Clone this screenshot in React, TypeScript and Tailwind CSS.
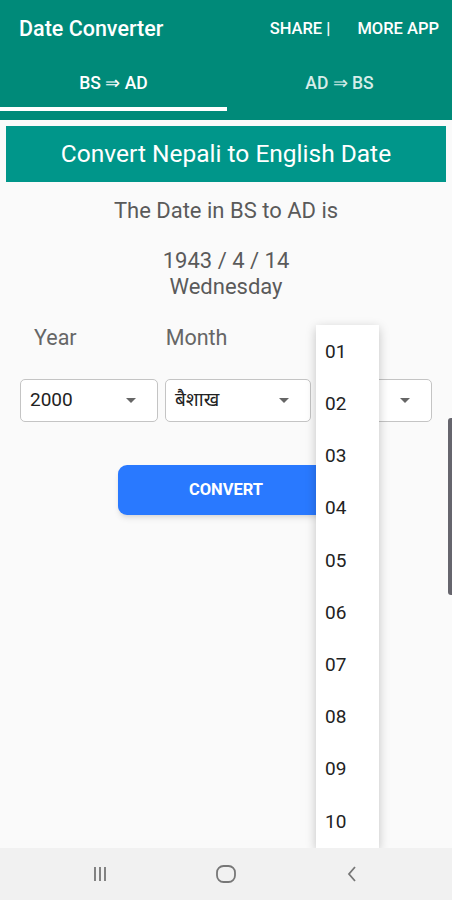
import React from "react";

const font = { fontFamily: "Roboto, 'Noto Sans', 'Noto Sans Devanagari', sans-serif" };

function Caret() {
  return (
    <svg width="10" height="6" viewBox="0 0 10 6" className="shrink-0">
      <path d="M0 0 L10 0 L5 5 Z" fill="#666" />
    </svg>
  );
}

function Select({ value, className }: { value: string; className: string }) {
  return (
    <div
      className={`h-[43px] border border-[#c4c4c4] rounded-[5px] bg-white flex items-center justify-between pl-[9px] pr-[21px] ${className}`}
    >
      <span className="text-[19px] text-[#222]">{value}</span>
      <Caret />
    </div>
  );
}

export default function App() {
  const days = ["01", "02", "03", "04", "05", "06", "07", "08", "09", "10"];
  return (
    <div className="w-[452px] h-[900px] bg-[#fafafa] relative overflow-hidden flex flex-col" style={font}>
      {/* App bar */}
      <div className="bg-[#008a79] h-[120px] flex flex-col shrink-0">
        <div className="h-[58px] flex items-center justify-between pl-[19px] pr-[13px]">
          <span className="text-white text-[21.5px] font-medium">Date Converter</span>
          <div className="flex items-center gap-[27px] text-white text-[16.5px] font-medium">
            <span>SHARE |</span>
            <span>MORE APP</span>
          </div>
        </div>
        <div className="flex h-[53px]">
          <div className="w-[227px] flex flex-col">
            <div className="flex-1 flex items-center justify-center text-white text-[17.5px] font-medium pt-[2px]">BS ⇒ AD</div>
            <div className="h-[4px] bg-white" />
          </div>
          <div className="flex-1 flex items-center justify-center text-[#d6ede9] text-[17.5px] font-medium pb-[2px]">AD ⇒ BS</div>
        </div>
      </div>

      {/* Content */}
      <div className="px-[6px] pt-[6px]">
        <div className="bg-[#00968a] h-[56px] flex items-center justify-center text-white text-[24.5px]">
          Convert Nepali to English Date
        </div>
      </div>
      <div className="text-center text-[#5a5a5a] text-[22px] leading-[28px] mt-[15px]">The Date in BS to AD is</div>
      <div className="text-center text-[#5a5a5a] text-[22px] leading-[26px] mt-[23px]">
        <div>1943 / 4 / 14</div>
        <div>Wednesday</div>
      </div>

      <div className="flex text-[#666] text-[21.5px] leading-[28px] mt-[24px]">
        <span className="ml-[34px]">Year</span>
        <span className="ml-[89px]">Month</span>
      </div>

      <div className="flex gap-[7px] px-[20px] mt-[27px]">
        <Select value="2000" className="w-[138px]" />
        <Select value="बैशाख" className="w-[146px]" />
        <Select value="" className="flex-1" />
      </div>

      <div className="flex justify-center mt-[43px]">
        <div className="w-[216px] h-[50px] rounded-[9px] bg-[#2979ff] shadow-md flex items-center justify-center text-white text-[16.5px] font-bold">
          CONVERT
        </div>
      </div>

      {/* Dropdown menu overlay */}
      <div className="absolute left-[316px] top-[325px] w-[63px] h-[523px] bg-white shadow-[0_3px_10px_rgba(0,0,0,0.22)] flex flex-col pt-[1px]">
        {days.map((d) => (
          <div key={d} className="h-[52.7px] flex items-center pl-[9px] text-[19px] text-[#222]">
            {d}
          </div>
        ))}
      </div>

      {/* Scroll indicator */}
      <div className="absolute right-0 top-[418px] w-[4px] h-[177px] bg-[#66656d] rounded-l-[3px]" />

      {/* System nav bar */}
      <div className="absolute bottom-0 left-0 right-0 h-[52px] bg-[#f1f1f1] flex items-center justify-center gap-[100px]">
        <svg width="26" height="18" viewBox="0 0 26 18">
          <path d="M8 2 V16 M13 2 V16 M18 2 V16" stroke="#777" strokeWidth="1.8" fill="none" />
        </svg>
        <svg width="26" height="20" viewBox="0 0 26 20">
          <rect x="4" y="2" width="18" height="16" rx="6.5" stroke="#777" strokeWidth="1.8" fill="none" />
        </svg>
        <svg width="26" height="20" viewBox="0 0 26 20">
          <path d="M16 3 L10 10 L16 17" stroke="#777" strokeWidth="1.8" fill="none" />
        </svg>
      </div>
    </div>
  );
}
